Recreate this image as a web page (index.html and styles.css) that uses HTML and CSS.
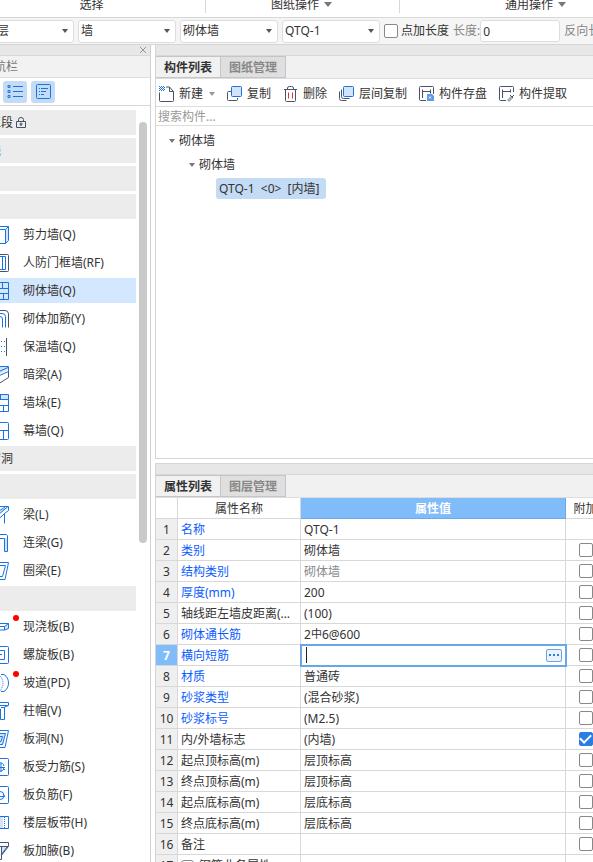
FILE: index.html
```
<!DOCTYPE html>
<html lang="zh-CN">
  <head>
    <meta charset="UTF-8" />
    <meta name="viewport" content="width=device-width, initial-scale=1.0" />
    <title>构件列表</title>
    <link rel="stylesheet" href="styles.css">
  </head>
  <body>
    <div class="app">
      <header class="ribbon">
        <button class="ribbon-group select-group">选择</button>
        <button class="ribbon-group drawing-group">图纸操作 <i class="caret large"></i></button>
        <button class="ribbon-group common-group">通用操作 <i class="caret large"></i></button>
      </header>

      <div class="options">
        <span class="combo first"><select aria-label="楼层"><option>首层</option></select><i class="caret"></i></span>
        <span class="combo"><select aria-label="构件分类"><option>墙</option></select><i class="caret"></i></span>
        <span class="combo"><select aria-label="构件类型"><option>砌体墙</option></select><i class="caret"></i></span>
        <span class="combo"><select aria-label="构件"><option>QTQ-1</option></select><i class="caret"></i></span>
        <label class="check-label"><input type="checkbox" class="check"> 点加长度</label>
        <label class="muted" for="len">长度:</label>
        <input type="text" id="len" class="length" value="0">
        <span class="muted">反向长度:</span>
      </div>

      <div class="workspace">
        <nav class="nav-panel">
          <div class="strip">
            <button class="close" aria-label="关闭">
              <svg width="8" height="8" viewBox="0 0 8 8"><path d="M1 1l6 6M7 1L1 7" /></svg>
            </button>
          </div>
          <div class="nav-title">导航栏</div>
          <div class="nav-tools">
            <button class="view-btn" aria-label="列表">
              <svg class="icon" viewBox="0 0 16 16"><path d="M1 1.500h2v2h-2zM1 6.500h2v2h-2zM1 11.500h2v2h-2zM6 2.500h10M6 7.500h10M6 12.500h10" /></svg>
            </button>
            <button class="view-btn" aria-label="详情">
              <svg class="icon" viewBox="0 0 16 16"><rect x="1.500" y=".5" width="14" height="14" rx="1" /><path d="M4 4.500h1M6 4.500h7M4 7.500h1M6 7.500h5M4 10.500h1M6 10.500h3" /></svg>
            </button>
          </div>
          <div class="nav-body">
            <ul class="nav-list">
              <li class="group">施工段
                <svg class="lock" viewBox="0 0 10 12"><path d="M.5 4.500h9v6h-9zM2.500 4.500v-2q0-2 2.500-2t2.500 2v2M5 7v2" /><circle cx="5" cy="7" r="1" /></svg>
              </li>
              <li class="group current">轴线</li>
              <li class="group">柱</li>
              <li class="group">墙</li>
              <li><a href="#"><svg class="icon" viewBox="0 0 18 18"><path class="fill" d="M15 4l2-3v13l-2 3z" /><path d="M1 3.500h13.500v14H1M1 1.500h2l1-1h13.500v14l-3 3M14.500 3.500l3-3" /></svg>剪力墙(Q)</a></li>
              <li><a href="#"><svg class="icon" viewBox="0 0 18 18"><path class="dark" d="M1 .5h15.500q1 0 1 1v15q0 1-1 1H1" /><path d="M1 2.500h13.500v13H1M11.500 2.500v13M6.500 2.500v13" /></svg>人防门框墙(RF)</a></li>
              <li class="selected"><a href="#"><svg class="icon" viewBox="0 0 18 18"><path d="M1 .5h16.500v17H1zM1 6.500h16.500M1 11.500h16.500M11.500 .5v6M6.500 6.500v5M12.500 11.500v6" /></svg>砌体墙(Q)</a></li>
              <li><a href="#"><svg class="icon" viewBox="0 0 18 18"><path class="dark" d="M1 .5h13q3.500 0 3.500 3.500v13.500" /><path d="M1 3.500h10q3.500 0 3.500 3v11M1 6.500h8q2.500 0 2.500 2.500v8.500M1 9.500h5q2.500 0 2.500 2.500v5.500" /></svg>砌体加筋(Y)</a></li>
              <li><a href="#"><svg class="icon" viewBox="0 0 18 18"><path class="dark" d="M15.500 0v18M2.500 0v18" /><path class="dots" d="M6.500 3v14M10.500 3v14M13.500 3v14" /></svg>保温墙(Q)</a></li>
              <li><a href="#"><svg class="icon" viewBox="0 0 18 18"><path class="fill" d="M2 5l5-4.500h10.500v3L4 10.500z" /><path d="M1 5.500l6-5h10.500v5L4 11.500M8 5.500l9-4" /><path class="dark" d="M17.500 5.500v6L8 17.500" /></svg>暗梁(A)</a></li>
              <li><a href="#"><svg class="icon" viewBox="0 0 18 18"><path class="fill" d="M9.500 .5h8v5h-8z" /><path d="M1 .5h16.500v17H1zM1 5.500h16.500M1 11.500h16.500M9.500 .5v5M12.500 11.500v6" /></svg>墙垛(E)</a></li>
              <li><a href="#"><svg class="icon" viewBox="0 0 18 18"><path d="M1 .5h15.500q1 0 1 1v15q0 1-1 1H1zM1 8.500h16.500M12.500 8.500v9M5.500 .5v8" /></svg>幕墙(Q)</a></li>
              <li class="group">门窗洞</li>
              <li class="group">梁</li>
              <li><a href="#"><svg class="icon" viewBox="0 0 18 18"><path class="fill" d="M9 5l4-3.500h4L10 7z" /><path d="M1 .5h16.500v4l-4 3v10M17 .5L4 11.500v5l9.500-9M14 1L3 8.500" /></svg>梁(L)</a></li>
              <li><a href="#"><svg class="icon" viewBox="0 0 18 18"><path class="fill" d="M14 4h2v13h-2z" /><path d="M1 .5h14.500l1 1v16h-3V4.500H1" /></svg>连梁(G)</a></li>
              <li><a href="#"><svg class="icon" viewBox="0 0 18 18"><path d="M4 .5h13.500l-3.500 17H1zM6 3.500h8.500l-3 11H4z" /></svg>圈梁(E)</a></li>
              <li class="group">板</li>
              <li><a href="#"><svg class="icon" viewBox="0 0 18 18"><path class="fill" d="M13 8l4-2v4l-4 2z" /><path d="M4 5.500h13.500v5l-4 1.500H1V8l3-2.500M1 8.500h12.500V12M13.500 8.500l4-3" /></svg>现浇板(B)<i class="dot"></i></a></li>
              <li><a href="#"><svg class="icon" viewBox="0 0 18 18"><rect x=".5" y=".5" width="17" height="17" rx="1" /><path d="M4 4.500h9.500v9H4M6 8.500h5" /></svg>螺旋板(B)</a></li>
              <li><a href="#"><svg class="icon" viewBox="0 0 18 18"><path d="M10 .5h3q4.500 3 4.500 8.500T13 17.500h-3M2 1q5 8 0 16" /><path class="dash" d="M9 2q6 7 0 15" /></svg>坡道(PD)<i class="dot"></i></a></li>
              <li><a href="#"><svg class="icon" viewBox="0 0 18 18"><path d="M1 .5h16.500v3l-4 1.500v12.500h-4V7H1M1 3.500h16M10 5.500h4" /></svg>柱帽(V)</a></li>
              <li><a href="#"><svg class="icon" viewBox="0 0 18 18"><path class="fill" d="M4 3h11l-3 12H2z" /><path d="M3 .5h14.500l-3.500 17H1M3 3.500h11.500l-3 11H1M6 6.500h5.500l-1.500 5H6" /></svg>板洞(N)</a></li>
              <li><a href="#"><svg class="icon" viewBox="0 0 18 18"><rect x=".5" y=".5" width="17" height="17" rx="1" /><path d="M4 9.500h10M8 5q4-1 5 3M7 13q4 1 6-2M10 5v9M11 9l3 3" /></svg>板受力筋(S)</a></li>
              <li><a href="#"><svg class="icon" viewBox="0 0 18 18"><rect x=".5" y=".5" width="17" height="17" rx="1" /><path d="M4 10.500h9M9 5.500q4 0 4 4q0 4-4 4M12 8l2 3" /></svg>板负筋(F)</a></li>
              <li><a href="#"><svg class="icon" viewBox="0 0 18 18"><path class="fill" d="M5 3h7v12H5z" /><path d="M1 2.500h16.500v12H1z" /><path class="dash" d="M13.500 3v12M5.500 3v12" /></svg>楼层板带(H)</a></li>
              <li><a href="#"><svg class="icon" viewBox="0 0 18 18"><path class="fill" d="M10 5h7l-7 9z" /><path d="M10 13l6-8" /><path class="dark" d="M1 .5h16.500v4H1M10.500 5v12.500h-3V5M17 5l-7 9" /></svg>板加腋(B)</a></li>
            </ul>
            <div class="scrollbar"></div>
          </div>
        </nav>

        <main class="content">
          <section class="panel components">
            <div class="strip"></div>
            <div class="tabs">
              <button class="tab active">构件列表</button>
              <button class="tab">图纸管理</button>
            </div>
            <div class="toolbar">
              <button class="tool">
                <svg class="icon tool-icon" viewBox="0 0 16 16"><path class="dark" d="M.5 6.500v8q0 1 1 1h12q1 0 1-1V5.500l-4-4.500H7M10.500 1v4.500h4" /><path class="dash" d="M0 .5h5M1 1.500h5M0 2.500h5M1 3.500h5M0 4.500h5" /></svg>
                新建 <i class="caret new-caret"></i>
              </button>
              <button class="tool">
                <svg class="icon tool-icon" viewBox="0 0 16 16"><path class="dark" d="M4 5.500H1.500q-1 0-1 1v7q0 1 1 1h8q1 0 1-1V12" /><rect class="fill line" x="4.500" y=".5" width="10" height="10" rx="1" /></svg>
                复制
              </button>
              <button class="tool">
                <svg class="icon tool-icon" viewBox="0 0 16 16"><path class="dark" d="M1 3.500h13M4.500 3v-1q0-1.500 2-1.500h2q2 0 2 1.500v1M2.500 4v10.500q0 1 1 1h8q1 0 1-1V4" /><path class="red" d="M5.500 6.500v6M9.500 6.500v6" /></svg>
                删除
              </button>
              <button class="tool">
                <svg class="icon tool-icon" viewBox="0 0 16 16"><path class="dark" d="M.5 5.500v7q0 2 2 2h5M2.500 3.500v7q0 2 2 2h6" /><rect class="fill line" x="4.500" y=".5" width="10" height="10" rx="1" /></svg>
                层间复制
              </button>
              <button class="tool">
                <svg class="icon tool-icon" viewBox="0 0 16 16"><path class="dark" d="M7 14.500H1.500q-1 0-1-1v-12q0-1 1-1h12q1 0 1 1V8M3.500 12V3.500M3.500 5.500h8M11.500 3.500v4" /><path class="solid" d="M8 8h5l2 2v5H8z" /><path class="white" d="M10 10.500l2 2M12 10.500l-2 2" /></svg>
                构件存盘
              </button>
              <button class="tool">
                <svg class="icon tool-icon" viewBox="0 0 16 16"><path class="dark" d="M7 14.500H1.500q-1 0-1-1v-12q0-1 1-1h12q1 0 1 1V6M3.500 12V3.500M3.500 5.500h8M11.500 3.500v3" /><path class="pen" d="M9 15l4-4" /><path class="dark" d="M11 9l3 3M13 11l2-2" /></svg>
                构件提取
              </button>
            </div>
            <input type="search" class="search" placeholder="搜索构件..." aria-label="搜索构件">
            <ul class="tree">
              <li><i class="caret tree-caret"></i>砌体墙
                <ul>
                  <li><i class="caret tree-caret"></i>砌体墙
                    <ul>
                      <li class="leaf"><span class="node">QTQ-1&nbsp; &lt;0&gt;&nbsp; [内墙]</span></li>
                    </ul>
                  </li>
                </ul>
              </li>
            </ul>
          </section>

          <section class="panel properties">
            <div class="strip"></div>
            <div class="tabs">
              <button class="tab active">属性列表</button>
              <button class="tab">图层管理</button>
            </div>
            <table class="props">
              <thead>
                <tr><th class="num"></th><th class="name">属性名称</th><th class="value">属性值</th><th class="extra">附加</th></tr>
              </thead>
              <tbody>
                <tr><th>1</th><td class="key">名称</td><td>QTQ-1</td><td></td></tr>
                <tr><th>2</th><td class="key">类别</td><td>砌体墙</td><td><input type="checkbox" class="check" aria-label="附加 类别"></td></tr>
                <tr><th>3</th><td class="key">结构类别</td><td class="readonly">砌体墙</td><td><input type="checkbox" class="check" aria-label="附加 结构类别"></td></tr>
                <tr><th>4</th><td class="key">厚度(mm)</td><td>200</td><td><input type="checkbox" class="check" aria-label="附加 厚度"></td></tr>
                <tr><th>5</th><td>轴线距左墙皮距离(mm)</td><td>(100)</td><td><input type="checkbox" class="check" aria-label="附加 轴线距左墙皮距离"></td></tr>
                <tr><th>6</th><td class="key">砌体通长筋</td><td>2<span class="rebar">中</span>6@600</td><td><input type="checkbox" class="check" aria-label="附加 砌体通长筋"></td></tr>
                <tr class="active"><th>7</th><td class="key">横向短筋</td><td class="editing"><div class="editor"><i class="cursor"></i><input type="text" aria-label="横向短筋"><button class="more" aria-label="更多"><i></i><i></i><i></i></button></div></td><td><input type="checkbox" class="check" aria-label="附加 横向短筋"></td></tr>
                <tr><th>8</th><td class="key">材质</td><td>普通砖</td><td><input type="checkbox" class="check" aria-label="附加 材质"></td></tr>
                <tr><th>9</th><td class="key">砂浆类型</td><td>(混合砂浆)</td><td><input type="checkbox" class="check" aria-label="附加 砂浆类型"></td></tr>
                <tr><th>10</th><td class="key">砂浆标号</td><td>(M2.5)</td><td><input type="checkbox" class="check" aria-label="附加 砂浆标号"></td></tr>
                <tr><th>11</th><td>内/外墙标志</td><td>(内墙)</td><td><input type="checkbox" class="check" checked aria-label="附加 内/外墙标志"></td></tr>
                <tr><th>12</th><td>起点顶标高(m)</td><td>层顶标高</td><td><input type="checkbox" class="check" aria-label="附加 起点顶标高"></td></tr>
                <tr><th>13</th><td>终点顶标高(m)</td><td>层顶标高</td><td><input type="checkbox" class="check" aria-label="附加 终点顶标高"></td></tr>
                <tr><th>14</th><td>起点底标高(m)</td><td>层底标高</td><td><input type="checkbox" class="check" aria-label="附加 起点底标高"></td></tr>
                <tr><th>15</th><td>终点底标高(m)</td><td>层底标高</td><td><input type="checkbox" class="check" aria-label="附加 终点底标高"></td></tr>
                <tr><th>16</th><td>备注</td><td></td><td><input type="checkbox" class="check" aria-label="附加 备注"></td></tr>
                <tr><th>17</th><td><button class="expand">+</button>钢筋业务属性</td><td></td><td></td></tr>
              </tbody>
            </table>
          </section>
        </main>
      </div>
    </div>
  </body>
</html>
```
FILE: styles.css
```
* {
  margin: 0;
  padding: 0;
  box-sizing: border-box;
}

body {
  height: 100vh;
  overflow: hidden;
  background: #fff;
  color: #333;
}

body,
button,
input,
select {
  font-family: "Noto Sans", "Noto Sans CJK SC", sans-serif;
  font-size: 12px;
  line-height: 16px;
}

button {
  border: 0;
  background: none;
  color: inherit;
  white-space: nowrap;
}

ul {
  list-style: none;
}

/* the window is scrolled sideways, both edges run out of view */
.app {
  width: calc(100% + 43px);
  height: 100%;
  margin-left: -30px;
  display: flex;
  flex-direction: column;
}

.caret {
  display: inline-block;
  border: 3px solid transparent;
  border-top: 4px solid #555;
  border-bottom: 0;
  flex: none;
}

.caret.large {
  border-width: 5px 4px 0;
  border-top-color: #777;
}

/* ribbon */
.ribbon {
  height: 18px;
  flex: none;
  display: flex;
  align-items: flex-start;
  border-bottom: 1px solid #d8d8d8;
}

.ribbon-group {
  height: 13px;
  display: flex;
  align-items: flex-end;
  justify-content: center;
  gap: 5px;
  border-right: 1px solid #d8d8d8;
  line-height: 16px;
}

.ribbon-group .caret {
  margin-bottom: 6px;
}

.select-group {
  width: 236px;
  padding-left: 8px;
}

.drawing-group {
  width: 194px;
  padding-right: 2px;
}

.common-group {
  flex: 1;
  padding-left: 66px;
}

/* options */
.options {
  height: 27px;
  flex: none;
  display: flex;
  align-items: center;
  gap: 4px;
  padding-left: 6px;
  background: #f5f5f5;
  border-bottom: 1px solid #d5d5d5;
  overflow: hidden;
  white-space: nowrap;
}

.combo {
  width: 98px;
  height: 23px;
  flex: none;
  display: flex;
  align-items: center;
  padding-right: 5px;
  background: #fff;
  border: 1px solid #ddd;
  border-radius: 3px;
}

.combo select {
  flex: 1;
  min-width: 0;
  height: 21px;
  padding-left: 2px;
  appearance: none;
  border: 0;
  background: none;
  color: #333;
}

.combo.first select {
  padding-left: 8px;
}

.check-label {
  display: flex;
  align-items: center;
  gap: 3px;
}

.muted {
  color: #888;
}

.options .length {
  width: 80px;
  height: 22px;
  margin-left: -4px;
  padding: 0 2px;
  border: 1px solid #ddd;
  border-radius: 3px;
  color: #333;
}

.check {
  width: 14px;
  height: 14px;
  flex: none;
  display: grid;
  place-content: center;
  appearance: none;
  border: 1px solid #888;
  border-radius: 2px;
  background: #fff;
}

.check:checked {
  background: #2b7de1;
  border-color: #2b7de1;
}

.check:checked::before {
  content: "";
  width: 9px;
  height: 5px;
  margin-bottom: 3px;
  border: solid #fff;
  border-width: 0 0 2px 2px;
  transform: rotate(-45deg);
}

.workspace {
  flex: 1;
  min-height: 0;
  display: flex;
  gap: 4px;
}

.strip {
  height: 11px;
  flex: none;
  display: flex;
  justify-content: flex-end;
  background: #e7e7e7;
  border-bottom: 1px solid #d8d8d8;
}

/* icons */
.icon {
  width: 18px;
  height: 18px;
  flex: none;
  fill: none;
  stroke: #1a73e0;
}

.icon .dark {
  stroke: #4a5268;
}

.icon .fill {
  fill: #d3e4fa;
  stroke: none;
}

.icon .line {
  stroke: #1a73e0;
}

.icon .dash {
  stroke-dasharray: 1 1;
}

.icon .dots {
  stroke-dasharray: 1 4;
}

.icon .red {
  stroke: #e03030;
}

.icon .solid {
  fill: #5b9be8;
  stroke: none;
}

.icon .white {
  stroke: #fff;
}

.icon .pen {
  stroke: #a4adbd;
  stroke-width: 3;
}

/* navigation */
.nav-panel {
  width: 181px;
  flex: none;
  display: flex;
  flex-direction: column;
  border-right: 1px solid #d0d0d0;
}

.close {
  width: 14px;
  height: 10px;
  display: flex;
  align-items: center;
  justify-content: center;
}

.close svg {
  fill: none;
  stroke: #999;
}

.nav-title {
  height: 22px;
  flex: none;
  padding-left: 12px;
  line-height: 21px;
  background: #f2f2f2;
  border-bottom: 1px solid #ddd;
  color: #777;
}

.nav-tools {
  height: 28px;
  flex: none;
  display: flex;
  align-items: center;
  gap: 4px;
  padding-left: 33px;
  border-bottom: 1px solid #d8d8d8;
}

.view-btn {
  width: 24px;
  height: 22px;
  display: flex;
  align-items: center;
  justify-content: center;
  border-radius: 3px;
  background: #c3dbf4;
}

.view-btn .icon {
  width: 16px;
  height: 16px;
}

.nav-body {
  flex: 1;
  min-height: 0;
  display: flex;
  gap: 3px;
  padding: 4px 3px 0 0;
  overflow: hidden;
}

.nav-list {
  flex: 1;
  display: flex;
  flex-direction: column;
  gap: 3px;
}

.nav-list li {
  height: 25px;
  flex: none;
  display: flex;
  align-items: center;
}

.nav-list .group {
  gap: 3px;
  padding-left: 7px;
  background: #ececec;
}

.nav-list .current {
  color: #1a6fe0;
}

.nav-list .selected {
  background: #d3e7ff;
}

.nav-list a {
  position: relative;
  display: flex;
  align-items: center;
  gap: 14px;
  padding-left: 21px;
  color: inherit;
  text-decoration: none;
}

.lock {
  width: 10px;
  height: 12px;
  fill: none;
  stroke: #4a5268;
}

.dot {
  position: absolute;
  top: -3px;
  left: 43px;
  width: 6px;
  height: 6px;
  border-radius: 50%;
  background: #f00;
}

.scrollbar {
  width: 8px;
  height: 421px;
  margin-top: 12px;
  border-radius: 4px;
  background: #c9c9c9;
}

/* right side */
.content {
  flex: 1;
  min-width: 0;
  display: flex;
  flex-direction: column;
  gap: 4px;
}

.panel {
  border-left: 1px solid #d5d5d5;
}

.components {
  border-bottom: 1px solid #d5d5d5;
}

.properties {
  flex: 1;
  min-height: 0;
  overflow: hidden;
  border-top: 1px solid #d5d5d5;
}

.tabs {
  height: 23px;
  display: flex;
  background: #f1f1f1;
  border-bottom: 1px solid #ddd;
}

.tab {
  padding: 2px 8px 0;
  border: 1px solid #c5c5c9;
  border-left: 0;
  background: #dfdfdf;
  color: #888;
  font-weight: bold;
}

.tab.active {
  background: #f1f1f1;
  color: #333;
}

.toolbar {
  height: 28px;
  display: flex;
  align-items: center;
  gap: 12px;
  padding: 2px 0 0 3px;
  border-bottom: 1px solid #ddd;
}

.tool {
  display: flex;
  align-items: center;
  gap: 4px;
}

.tool-icon {
  width: 16px;
  height: 16px;
}

.new-caret {
  margin-left: 2px;
  border-top-color: #999;
}

.search {
  display: block;
  width: 100%;
  height: 19px;
  padding: 0 2px;
  border: 0;
  border-bottom: 1px solid #ddd;
  outline: 0;
}

.search::placeholder {
  color: #999;
}

.tree {
  min-height: 332px;
  padding: 3px 0 0 13px;
  line-height: 24px;
}

.tree ul {
  padding-left: 20px;
}

.tree-caret {
  margin-right: 4px;
  vertical-align: 2px;
  border-top-color: #777;
}

.node {
  display: inline-block;
  padding: 0 6px 0 3px;
  line-height: 21px;
  border-radius: 3px;
  background: #c3dbf4;
}

.tree .leaf {
  padding-left: 7px;
}

/* property grid */
.props {
  width: 100%;
  table-layout: fixed;
  border-spacing: 0;
}

.props th,
.props td {
  height: 21px;
  padding: 2px 3px 0;
  line-height: 18px;
  border-right: 1px solid #d8d8d8;
  border-bottom: 1px solid #d8d8d8;
  font-weight: normal;
  text-align: left;
  white-space: nowrap;
  overflow: hidden;
  text-overflow: ellipsis;
}

.props thead th {
  text-align: center;
}

.props .num {
  width: 22px;
}

.props .name {
  width: 123px;
}

.props .value {
  background: #80bbfa;
  border-color: #6aaae6;
  color: #fff;
  font-weight: bold;
}

.props .extra {
  width: 40px;
}

.props tbody th {
  padding: 2px 0 0;
  background: #efefef;
  text-align: center;
}

.props td:last-child {
  padding-top: 0;
}

.props td:last-child .check {
  margin: 0 auto;
}

.props .key {
  color: #0b5cff;
}

.props .readonly {
  color: #888;
}

.props .active th {
  background: #80bbfa;
  color: #fff;
  font-weight: bold;
}

.props .editing {
  padding-top: 0;
  outline: 2px solid #66a7e8;
  outline-offset: -1px;
}

.rebar {
  font-size: 11px;
  line-height: 11px;
  vertical-align: 1px;
}

.editor {
  display: flex;
  align-items: center;
  height: 20px;
  padding-left: 2px;
}

.editor input {
  flex: 1;
  min-width: 0;
  border: 0;
  outline: 0;
  background: none;
}

.cursor {
  width: 1px;
  height: 16px;
  background: #222;
}

.more {
  width: 16px;
  height: 13px;
  display: flex;
  align-items: center;
  justify-content: center;
  gap: 2px;
  border: 1px solid #66a7e8;
  border-radius: 2px;
  background: #edf1fa;
}

.more i {
  width: 2px;
  height: 2px;
  background: #2b7de1;
}

.expand {
  width: 13px;
  height: 13px;
  margin-right: 5px;
  line-height: 11px;
  border: 1px solid #888;
  border-radius: 3px;
  vertical-align: middle;
}
```
